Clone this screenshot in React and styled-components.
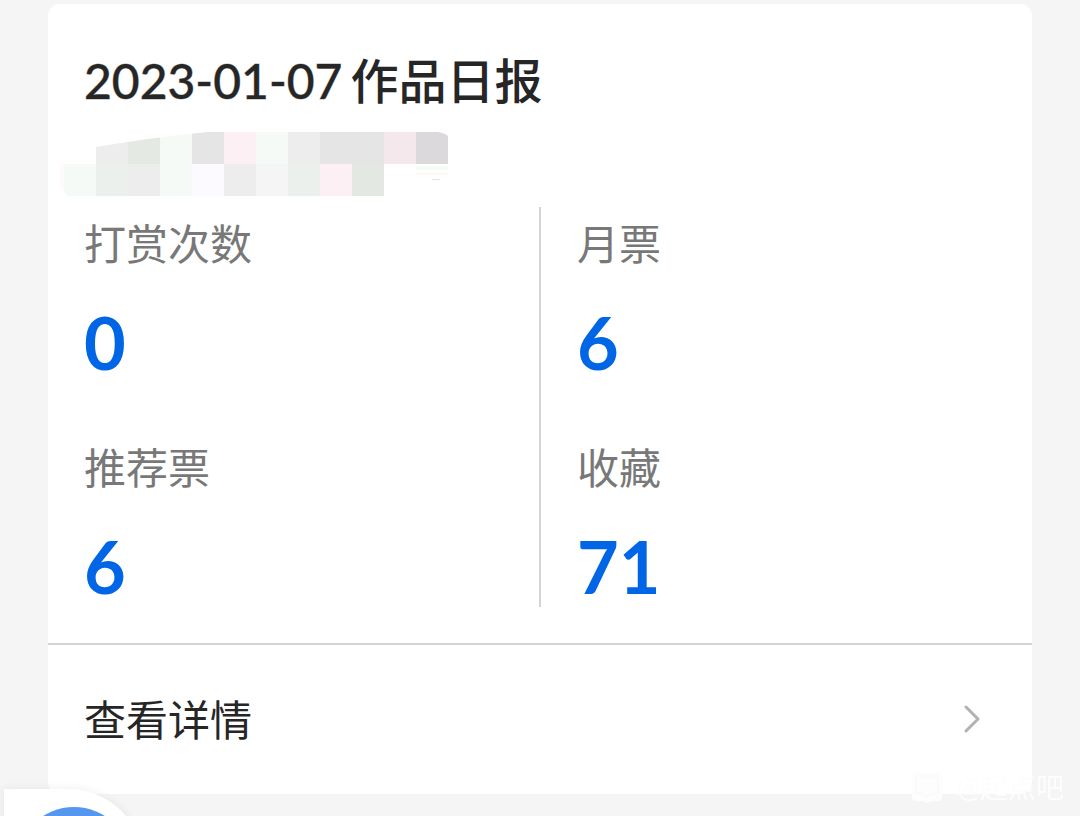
import React from 'react';
import styled, { createGlobalStyle } from 'styled-components';

const GlobalStyle = createGlobalStyle`
  * {
    box-sizing: border-box;
  }

  body {
    margin: 0;
    background: #f5f5f5;
    color: #262626;
    font-family: Lato, "Noto Sans CJK SC", sans-serif;
  }
`;

const Page = styled.main`
  padding: 4px 48px 22px;
`;

const Card = styled.article`
  background: #fff;
  border-radius: 12px;
`;

const Header = styled.header`
  padding: 41px 36px 0;
`;

const Title = styled.h1`
  display: flex;
  gap: 8px;
  margin: 0;
  font-size: 48px;
  line-height: 72px;
  font-weight: 500;
`;

const ReportDate = styled.time`
  -webkit-text-stroke: 1px rgba(38, 38, 38, 0.4);
`;

const Mosaic = styled.svg`
  display: block;
  width: 400px;
  height: 72px;
  margin: 15px 0 3px -26px;
`;

const Stats = styled.div`
  display: grid;
  grid-template-columns: 1fr 1fr;
  padding-bottom: 36px;
  border-bottom: 2px solid #d4d4d6;
`;

const Column = styled.dl`
  display: grid;
  gap: 48px;
  height: 400px;
  align-content: start;
  margin: 0;
  padding: 5px 36px 0;

  & + & {
    margin-left: -1px;
    border-left: 2px solid #d4d4d6;
  }
`;

const Stat = styled.div`
  height: 176px;
`;

const Label = styled.dt`
  color: #787878;
  font-size: 42px;
  line-height: 64px;
`;

const Value = styled.dd`
  margin: 22px 0 0;
  color: #0066e6;
  font-size: 72px;
  line-height: 88px;
  font-weight: 700;
`;

const DetailLink = styled.a`
  display: flex;
  align-items: center;
  justify-content: space-between;
  height: 149px;
  padding: 0 50px 0 36px;
  color: #262626;
  font-size: 42px;
  line-height: 64px;
  text-decoration: none;
`;

const Chevron = styled.svg`
  width: 20px;
  height: 30px;
`;

const FloatingButton = styled.button`
  position: fixed;
  left: 4px;
  bottom: -125px;
  display: grid;
  place-items: center;
  width: 140px;
  height: 152px;
  padding: 0;
  border: 0;
  border-radius: 0 76px 76px 0;
  background: #fff;
  box-shadow: 0 0 8px rgba(120, 60, 90, 0.1);

  &::before {
    content: "";
    width: 116px;
    height: 116px;
    border-radius: 50%;
    background: #5597ee;
  }
`;

const Watermark = styled.div`
  position: fixed;
  right: 16px;
  bottom: 9px;
  display: flex;
  align-items: center;
  gap: 14px;
  color: #fdfdfd;
  font-size: 28px;
  line-height: 40px;
`;

const WatermarkIcon = styled.svg`
  width: 32px;
  height: 32px;
`;

const TILES = [
  [38, 0, 32, '#ededed'],
  [70, 0, 32, '#e4e9e3'],
  [102, 0, 32, '#f5faf6'],
  [134, 0, 32, '#e5e5e5'],
  [166, 0, 32, '#fdf0f4'],
  [198, 0, 32, '#f5faf6'],
  [230, 0, 32, '#ededed'],
  [262, 0, 64, '#e5e5e5'],
  [326, 0, 32, '#f5e8ed'],
  [358, 0, 32, '#dbd9dc'],
  [6, 32, 32, '#f5faf7'],
  [38, 32, 32, '#ecf0ec'],
  [70, 32, 32, '#ededed'],
  [102, 32, 32, '#f5faf6'],
  [134, 32, 32, '#fdfaff'],
  [166, 32, 32, '#ededed'],
  [198, 32, 32, '#f5f5f6'],
  [230, 32, 32, '#ecf0ed'],
  [262, 32, 32, '#fdf0f5'],
  [294, 32, 32, '#e4e8e2'],
];

const COLUMNS = [
  [
    { label: '打赏次数', value: '0' },
    { label: '推荐票', value: '6' },
  ],
  [
    { label: '月票', value: '6' },
    { label: '收藏', value: '71' },
  ],
];

function HiddenName() {
  return (
    <Mosaic viewBox="0 0 400 72" aria-hidden="true">
      <clipPath id="mosaic-edge">
        <path d="M0 32H38V15Q96 5 150 0H380Q387 1 390 4V64H10Q6 62 0 50Z" />
      </clipPath>
      <g clipPath="url(#mosaic-edge)" shapeRendering="crispEdges">
        {TILES.map(([x, y, width, fill]) => (
          <rect key={`${x}-${y}`} x={x} y={y} width={width} height="32" fill={fill} />
        ))}
        <rect x="2" y="32" width="4" height="30" fill="#fefafd" />
        <rect x="358" y="34" width="32" height="4" fill="#f7fbf8" />
        <rect x="358" y="40" width="32" height="3" fill="#fefaf6" />
        <rect x="374" y="47" width="8" height="1" fill="#e2e2e2" />
      </g>
    </Mosaic>
  );
}

export default function App() {
  return (
    <>
      <GlobalStyle />
      <Page>
        <Card>
          <Header>
            <Title>
              <ReportDate dateTime="2023-01-07">2023-01-07</ReportDate>
              <span>作品日报</span>
            </Title>
            <HiddenName />
          </Header>
          <Stats>
            {COLUMNS.map((items) => (
              <Column key={items[0].label}>
                {items.map(({ label, value }) => (
                  <Stat key={label}>
                    <Label>{label}</Label>
                    <Value>{value}</Value>
                  </Stat>
                ))}
              </Column>
            ))}
          </Stats>
          <DetailLink href="#details">
            查看详情
            <Chevron viewBox="0 0 20 30" fill="none" aria-hidden="true">
              <path d="M4 2L16 14L4 26" stroke="#b2b2b2" strokeWidth="3" strokeLinecap="round" strokeLinejoin="round" />
            </Chevron>
          </DetailLink>
        </Card>
      </Page>
      <FloatingButton type="button" aria-label="菜单" />
      <Watermark>
        <WatermarkIcon viewBox="0 0 32 32" aria-hidden="true">
          <path
            d="M5 1H27Q31 1 31 5V26Q31 30 27 30H20L16 32L12 30H5Q1 30 1 26V5Q1 1 5 1Z"
            fill="#fdfdfd"
          />
          <path
            d="M5 6Q11 3 16 6Q21 3 27 6V22Q21 22 16 26Q11 22 5 22Z"
            fill="#fdfdfd"
            stroke="#fafafa"
            strokeWidth="2"
          />
        </WatermarkIcon>
        <span>@起点吧</span>
      </Watermark>
    </>
  );
}
